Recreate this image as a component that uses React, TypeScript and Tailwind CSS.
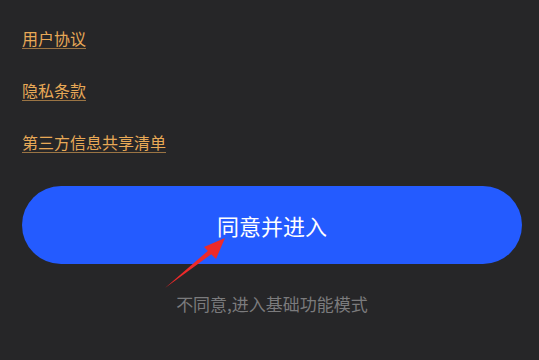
import React from "react";

const font = { fontFamily: '"Noto Sans CJK SC", "Noto Sans", sans-serif' };

export default function App() {
  const links = ["用户协议", "隐私条款", "第三方信息共享清单"];

  return (
    <div className="relative h-[360px] w-[539px] overflow-hidden bg-[#262628]" style={font}>
      {/* Links */}
      <div className="flex flex-col pl-[22px] pt-[12px]">
        {links.map((label) => (
          <div key={label} className="h-[52px] leading-[52px]">
            <span className="text-[16px] text-[#e8a957] underline decoration-[#9a7444] underline-offset-[3px]">
              {label}
            </span>
          </div>
        ))}
      </div>

      {/* Agree button */}
      <div className="ml-[22px] mt-[18px] flex h-[78px] w-[500px] items-center justify-center rounded-full bg-[#245bff]">
        <span className="text-[22px] text-white">同意并进入</span>
      </div>

      {/* Disagree */}
      <div className="ml-[22px] mt-[27px] w-[500px] text-center text-[17px] text-[#7b7b7d]">
        不同意,进入基础功能模式
      </div>

      {/* Annotation arrow */}
      <svg className="pointer-events-none absolute left-0 top-0" width="539" height="360">
        <polygon points="165,288 210,249 213,253" fill="#ee2a2a" />
        <polygon points="225,238 204,247 216,259" fill="#ee2a2a" />
      </svg>
    </div>
  );
}
